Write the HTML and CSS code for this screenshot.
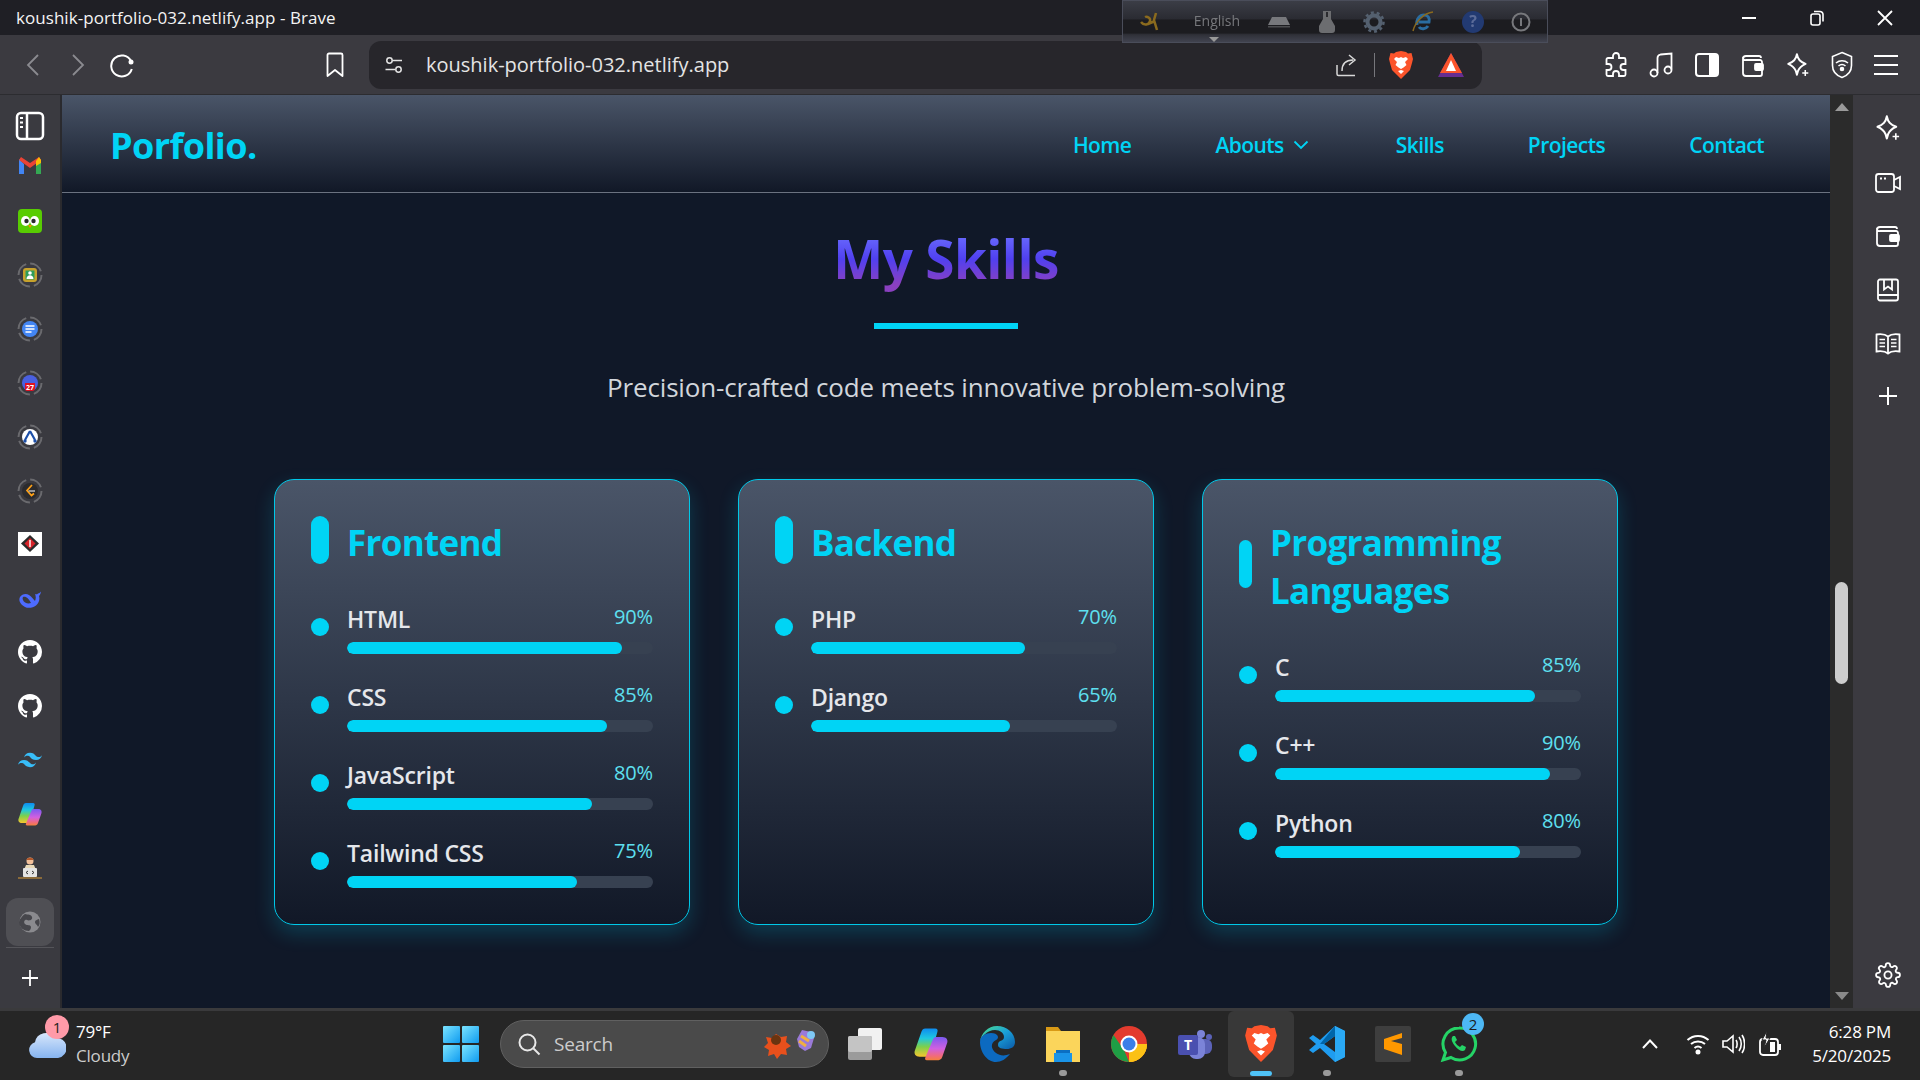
FILE: index.html
```html
<!DOCTYPE html>
<html lang="en">
<head>
  <meta charset="UTF-8" />
  <title>koushik-portfolio-032.netlify.app - Brave</title>
  <link rel="stylesheet" href="styles.css">
</head>
<body>
<svg class="defs" width="0" height="0">
  <defs>
    <symbol id="github" viewBox="0 0 16 16"><path fill="#fff" d="M8 0C3.58 0 0 3.58 0 8c0 3.54 2.29 6.53 5.47 7.59.4.07.55-.17.55-.38 0-.19-.01-.82-.01-1.49-2.01.37-2.53-.49-2.69-.94-.09-.23-.48-.94-.82-1.13-.28-.15-.68-.52-.01-.53.63-.01 1.08.58 1.23.82.72 1.21 1.87.87 2.33.66.07-.52.28-.87.51-1.07-1.78-.2-3.64-.89-3.64-3.95 0-.87.31-1.59.82-2.15-.08-.2-.36-1.02.08-2.12 0 0 .67-.21 2.2.82.64-.18 1.32-.27 2-.27.68 0 1.36.09 2 .27 1.53-1.04 2.2-.82 2.2-.82.44 1.1.16 1.92.08 2.12.51.56.82 1.27.82 2.15 0 3.07-1.87 3.75-3.65 3.95.29.25.54.73.54 1.48 0 1.07-.01 1.93-.01 2.2 0 .21.15.46.55.38A8.013 8.013 0 0016 8c0-4.42-3.58-8-8-8z"/></symbol>
    <symbol id="leo" viewBox="0 0 24 24"><path fill="none" stroke="#fff" stroke-width="1.8" stroke-linejoin="round" d="M11 2c1 5 3 7 8 9-3.500 1.500-5.500 3-7 6.500l-1 3.500-1-3.500C8.500 14 6.500 12.500 3 11c5-2 7-4 8-9z"/><path fill="#fff" d="M18 16.500h1.400v2.100h2.100V20h-2.100v2.100H18V20h-2.100v-1.400H18z"/></symbol>
    <symbol id="brave" viewBox="0 0 24 28"><path fill="#fb542b" d="M12 0l5 1 2 1.500L22.500 2 24 8l-1 4-2 7-5 5-4 4-4-4-5-5-2-7-1-4 1.500-6L5 2.500 7 1z"/><path fill="#fff" d="M12 18l-2.500-1.500-3-2.500L8 11 5 8l2-2 3 1 2-1 2 1 3-1 2 2-3 3 1.500 3-3 2.500zM9 20l3-1 3 1-3 3z"/></symbol>
    <linearGradient id="copilotA" x1="0" y1="0" x2="0" y2="1"><stop offset="0" stop-color="#0e8cf0"/><stop offset=".35" stop-color="#1fc8e0"/><stop offset=".65" stop-color="#7ed04a"/><stop offset="1" stop-color="#f7c52e"/></linearGradient>
    <linearGradient id="copilotB" x1="0" y1="0" x2="0" y2="1"><stop offset="0" stop-color="#7a5af0"/><stop offset=".5" stop-color="#d060e0"/><stop offset=".8" stop-color="#f06a80"/><stop offset="1" stop-color="#f5803b"/></linearGradient>
    <symbol id="copilot" viewBox="0 0 24 24"><path fill="url(#copilotA)" d="M8 1h7c1.500 0 2 1 1.500 2.500L12 19c-.5 1.500-1.500 2-3 2H4c-3 0-4-2-3.500-4L5 4c.5-2 1.500-3 3-3z"/><path fill="url(#copilotB)" d="M15.500 7H20c3 0 4 2 3.500 4l-3.500 10c-.5 2-2 2.500-4 2.500H9c-1 0-1.500-1-1-2l5.500-13c.5-1 1-1.500 2-1.500z"/></symbol>
    <linearGradient id="startTile" x1="0" y1="0" x2="1" y2="1"><stop offset="0" stop-color="#7be4ff"/><stop offset="1" stop-color="#0f9bf0"/></linearGradient>
    <linearGradient id="edgeG" x1="0" y1="0" x2="1" y2="1"><stop offset="0" stop-color="#4fe08a"/><stop offset=".5" stop-color="#1aa0d8"/><stop offset="1" stop-color="#0b5aa8"/></linearGradient>
  </defs>
</svg>

<div class="window">
  <div class="titlebar">
    <div class="window-title">koushik-portfolio-032.netlify.app - Brave</div>
    <div class="window-controls">
      <svg width="16" height="16" viewBox="0 0 16 16"><path d="M1 8h14" stroke="#fff" stroke-width="2"/></svg>
      <svg width="16" height="16" viewBox="0 0 16 16" fill="none" stroke="#fff" stroke-width="1.600"><rect x="2" y="4" width="9" height="11" rx="2"/><path d="M5 1.500h6a3 3 0 013 3v7"/></svg>
      <svg width="16" height="16" viewBox="0 0 16 16"><path d="M1 1l14 14M15 1L1 15" stroke="#fff" stroke-width="1.800"/></svg>
    </div>
  </div>

  <div class="lang-bar">
    <svg width="22" height="20" viewBox="0 0 22 20" fill="none" stroke="#8a6a1e" stroke-width="2.500"><path d="M2 10c3 4 8 3 9-1 1-3-3-5-5-4M17 1l-2 7 3 10M9 12l7-3"/></svg>
    <span class="lang-name">English</span>
    <svg width="24" height="12" viewBox="0 0 24 12"><path d="M5 1h14l4 8H1z" fill="#77787c"/><path d="M1 10h22v1.500H1z" fill="#4c4d50"/></svg>
    <svg width="18" height="24" viewBox="0 0 18 24"><path d="M5 1h8v8l4 7v4a3 3 0 01-3 3H4a3 3 0 01-3-3v-4l4-7z" fill="#6c6d70"/><path d="M8 2h2v5H8z" fill="#2b2b2f"/></svg>
    <svg width="22" height="22" viewBox="0 0 22 22"><circle cx="11" cy="11" r="6.500" fill="none" stroke="#54606f" stroke-width="4"/><circle cx="11" cy="11" r="9.500" fill="none" stroke="#54606f" stroke-width="2.500" stroke-dasharray="3 2.900"/></svg>
    <svg width="24" height="24" viewBox="0 0 24 24" fill="none"><path d="M6 15c-1-6 3-10 7-10 4 0 6 3 5 7H8m9 4c-2 3-7 4-9 1" stroke="#2a6ca0" stroke-width="3"/><path d="M2 21C4 12 13 3 22 2" stroke="#8a6a1e" stroke-width="1.500"/></svg>
    <svg width="22" height="22" viewBox="0 0 22 22"><circle cx="11" cy="11" r="11" fill="#223a72"/><text class="lang-q" x="11" y="16">?</text></svg>
    <svg width="20" height="20" viewBox="0 0 20 20"><circle cx="10" cy="10" r="8.500" fill="none" stroke="#77787c" stroke-width="2"/><path d="M9 6h2v8H9z" fill="#77787c"/></svg>
    <span class="lang-caret"></span>
  </div>

  <div class="toolbar">
    <svg class="nav-back" width="14" height="24" viewBox="0 0 14 24"><path d="M12 2L2 12l10 10" fill="none" stroke="#8b8b90" stroke-width="1.800"/></svg>
    <svg class="nav-forward" width="14" height="24" viewBox="0 0 14 24"><path d="M2 2l10 10L2 22" fill="none" stroke="#8b8b90" stroke-width="1.800"/></svg>
    <svg class="nav-reload" width="26" height="26" viewBox="0 0 26 26"><path d="M22 9a10.500 10.500 0 10.800 8" fill="none" stroke="#fff" stroke-width="2"/><circle cx="22" cy="10" r="2.500" fill="#fff"/></svg>
    <svg class="nav-bookmark" width="20" height="26" viewBox="0 0 20 26"><path d="M2.500 3a1.500 1.500 0 011.500-1.500h12A1.500 1.500 0 0117.500 3v21L10 18l-7.500 6z" fill="none" stroke="#fff" stroke-width="1.800" stroke-linejoin="round"/></svg>
    <div class="address">
      <svg width="20" height="20" viewBox="0 0 20 20" fill="none" stroke="#e4e4e4" stroke-width="1.500"><circle cx="5.500" cy="5.500" r="2.700"/><path d="M8.500 5.500H18M1.500 14.500H11"/><circle cx="14.500" cy="14.500" r="2.700"/></svg>
      <span class="address-url">koushik-portfolio-032.netlify.app</span>
      <svg class="share" width="24" height="24" viewBox="0 0 24 24" fill="none" stroke="#d8d8d8" stroke-width="1.500"><path d="M2 12v9a1.500 1.500 0 001.500 1.500H20M7 18c0-7 4-11 11-11M14 2l6 5-6 5"/></svg>
      <span class="address-sep"></span>
      <svg class="address-brave" width="24" height="28"><use href="#brave"/></svg>
      <svg class="address-rewards" width="28" height="26" viewBox="0 0 28 26"><path d="M14 1L1 25h26z" fill="#662d91"/><path d="M14 1L3 21h22z" fill="#fb542b"/><path d="M14 8l-5 11h10z" fill="#fff"/></svg>
    </div>
    <div class="tool-icons">
      <svg width="26" height="26" viewBox="0 0 26 26"><path d="M10 4a3 3 0 016 0v2h5a1.500 1.500 0 011.500 1.500V12h-2a3 3 0 000 6h2v4.500A1.500 1.500 0 0121 24h-5v-2a3 3 0 00-6 0v2H5a1.500 1.500 0 01-1.500-1.500V18h2a3 3 0 000-6h-2V7.500A1.500 1.500 0 015 6h5z" fill="none" stroke="#fff" stroke-width="1.800"/></svg>
      <svg width="26" height="26" viewBox="0 0 26 26" fill="none" stroke="#fff" stroke-width="1.800"><circle cx="6" cy="21" r="3.500"/><circle cx="20" cy="18" r="3.500"/><path d="M9.500 21V6c0-2 1-3 3-3.500l11-1v16"/></svg>
      <svg width="26" height="26" viewBox="0 0 26 26"><rect x="2" y="2" width="22" height="22" rx="3" fill="none" stroke="#fff" stroke-width="2"/><path d="M15 2h6a3 3 0 013 3v16a3 3 0 01-3 3h-6z" fill="#fff"/></svg>
      <svg width="26" height="26" viewBox="0 0 26 26" fill="none" stroke="#fff" stroke-width="1.800"><path d="M4 7a3 3 0 013-3h13a2 2 0 012 2M4 7v14a3 3 0 003 3h14a2 2 0 002-2V10a2 2 0 00-2-2H7a3 3 0 01-3-1z"/><rect x="16" y="12" width="8" height="6" rx="1" fill="#fff"/></svg>
      <svg width="26" height="26"><use href="#leo"/></svg>
      <svg width="24" height="28" viewBox="0 0 24 28" fill="none" stroke="#fff" stroke-width="1.600"><path d="M12 1.500l9.500 4v9c0 6-4 10-9.500 12-5.500-2-9.500-6-9.500-12v-9z"/><path d="M6 12c3.500-3 8.500-3 12 0M8.500 15c2-1.700 5-1.700 7 0"/><circle cx="12" cy="18" r="1.500" fill="#fff"/></svg>
      <svg width="26" height="26" viewBox="0 0 26 26"><path d="M1 4h24M1 13h24M1 22h24" stroke="#fff" stroke-width="2"/></svg>
    </div>
  </div>

  <div class="browser">
    <aside class="sidebar">
      <svg class="side-icon" width="30" height="30" viewBox="0 0 30 30" fill="none" stroke="#fff" stroke-width="2.500"><rect x="2" y="2" width="26" height="26" rx="4"/><path d="M12 2v26"/><path d="M5 7h3M5 11.500h3M5 16h3" stroke-width="2"/></svg>
      <svg class="side-icon" width="24" height="18" viewBox="0 0 24 18"><path d="M1 3v15h5V8z" fill="#4285f4"/><path d="M23 3v15h-5V8z" fill="#34a853"/><path d="M1 4l11 8 11-8-2-3-9 6-9-6z" fill="#ea4335"/><path d="M21 1l2 3v3l-5 3V5z" fill="#fbbc04"/></svg>
      <svg class="side-icon" width="24" height="24" viewBox="0 0 24 24"><rect width="24" height="24" rx="4" fill="#58cc02"/><ellipse cx="7.500" cy="12" rx="4.500" ry="5" fill="#fff"/><ellipse cx="16.500" cy="12" rx="4.500" ry="5" fill="#fff"/><circle cx="8.500" cy="12" r="2.200" fill="#2b2b2b"/><circle cx="15.500" cy="12" r="2.200" fill="#2b2b2b"/><path d="M10 16h4l-2 3z" fill="#f49000"/></svg>
      <svg class="side-icon" width="26" height="26" viewBox="0 0 26 26"><circle class="ring" cx="13" cy="13" r="11.500"/><rect x="6" y="6" width="14" height="14" rx="3" fill="#c7a22c"/><rect x="8.500" y="8.500" width="9" height="9" fill="#2d9d5a"/><circle cx="13" cy="11" r="1.800" fill="#fff"/><path d="M9.500 17c0-5 7-5 7 0z" fill="#fff"/></svg>
      <svg class="side-icon" width="26" height="26" viewBox="0 0 26 26"><circle class="ring" cx="13" cy="13" r="11.500"/><circle cx="13" cy="13" r="8" fill="#4285f4"/><path d="M8.500 10h9M8.500 13h9M8.500 16h6" stroke="#fff" stroke-width="1.500"/></svg>
      <svg class="side-icon" width="26" height="26" viewBox="0 0 26 26"><circle class="ring" cx="13" cy="13" r="11.500"/><circle cx="13" cy="13" r="8" fill="#4a60e0"/><path d="M8 13h10v5a3 3 0 01-3 3h-5a2 2 0 01-2-2z" fill="#e01020"/><text class="cal-day" x="13" y="20">27</text></svg>
      <svg class="side-icon" width="26" height="26" viewBox="0 0 26 26"><circle class="ring" cx="13" cy="13" r="11.500"/><circle cx="13" cy="13" r="8" fill="#fff"/><path d="M13 7l-5 9M13 7l5 9" stroke="#1d4fa8" stroke-width="2.200"/><circle cx="8" cy="17" r="1.700" fill="#1d4fa8"/><circle cx="18" cy="17" r="1.700" fill="#1d4fa8"/></svg>
      <svg class="side-icon" width="26" height="26" viewBox="0 0 26 26"><circle class="ring" cx="13" cy="13" r="11.500"/><circle cx="13" cy="13" r="8" fill="#2b2b2e"/><path d="M15 7l-5 5.500 4.500 5 2.500-2" fill="none" stroke="#ffa116" stroke-width="1.700"/><path d="M11.500 13H18" stroke="#bbb" stroke-width="1.500"/></svg>
      <svg class="side-icon" width="24" height="24" viewBox="0 0 24 24"><rect width="24" height="24" fill="#fff"/><path d="M12 3l9 8.500-9 8.500-9-8.500z" fill="#2b2b2b"/><path d="M12 6l5.500 5.500L12 17l-5.500-5.500z" fill="#d8232a"/><path d="M11.300 8h1.400v7h-1.400z" fill="#fff"/></svg>
      <svg class="side-icon" width="24" height="20" viewBox="0 0 24 20"><path fill-rule="evenodd" fill="#4d6bfe" d="M2 9c2-3 6-4 9-2 3 2 4 4 6 6 1-2 1-5 0-7 1 .5 2 .5 3-.5 1 0 2-1 3-2-.3 2-1 3.500-2 4.500 1 3 0 7-3 9.500-3 2.500-8 3-11 1.500C3 17 0 13 2 9zM5 9c3-1 6 2 8 6-3 1-7 0-8-3-.5-1-.5-2 0-3z"/></svg>
      <svg class="side-icon" width="24" height="24"><use href="#github"/></svg>
      <svg class="side-icon" width="24" height="24"><use href="#github"/></svg>
      <svg class="side-icon" width="24" height="24" viewBox="2 4 20 16"><path fill="#38bdf8" d="M12 6c-2.670 0-4.330 1.330-5 4 1-1.330 2.170-1.830 3.500-1.500.76.190 1.300.740 1.900 1.350.980 1 2.090 2.150 4.600 2.150 2.670 0 4.330-1.330 5-4-1 1.330-2.170 1.830-3.500 1.500-.760-.190-1.300-.740-1.900-1.350C15.620 7.150 14.500 6 12 6zM7 12c-2.670 0-4.330 1.330-5 4 1-1.330 2.170-1.830 3.500-1.500.760.190 1.300.740 1.900 1.350C8.380 16.850 9.500 18 12 18c2.670 0 4.330-1.330 5-4-1 1.330-2.170 1.830-3.500 1.500-.760-.190-1.300-.740-1.900-1.350C10.620 13.150 9.500 12 7 12z"/></svg>
      <svg class="side-icon" width="24" height="24"><use href="#copilot"/></svg>
      <svg class="side-icon" width="24" height="24" viewBox="0 0 24 24"><circle cx="12" cy="5" r="3.500" fill="#f2c09a"/><path d="M8.500 4c0-3 7-3 7 0z" fill="#b4582a"/><path d="M8 9h8l2 5H6z" fill="#e7d8b8"/><rect x="5" y="12" width="14" height="9" rx="1" fill="#e4e4e4"/><path d="M10 15l-2 1.500 2 1.500M14 15l2 1.500-2 1.500" fill="none" stroke="#333" stroke-width="1"/><path d="M0 21h24v2H0z" fill="#8a6a3a"/></svg>
      <div class="side-active">
        <svg width="22" height="22" viewBox="0 0 22 22"><circle cx="11" cy="11" r="10.500" fill="#8a8a8e"/><path d="M6 3c3 1 6 0 7 3s-3 4-5 3-4 2-2 4 5 0 6 3c0 2-1 3-2 4-5 0-9-3-10-8 0-3 3-7 6-9zM20 8c-2 1-4 1-4 3s2 2 3 5c2-2 2-5 1-8z" fill="#46464b"/></svg>
      </div>
      <span class="side-rule"></span>
      <svg class="side-plus" width="18" height="18" viewBox="0 0 18 18"><path d="M9 1v16M1 9h16" stroke="#fff" stroke-width="1.800"/></svg>
    </aside>

    <div class="page">
      <header class="site-header">
        <div class="logo">Porfolio.</div>
        <nav class="site-nav">
          <a href="#">Home</a>
          <a href="#" class="has-caret">Abouts
            <svg width="16" height="10" viewBox="0 0 16 10"><path d="M1.500 1.500L8 8l6.500-6.500" fill="none" stroke="#00d4f5" stroke-width="1.800"/></svg>
          </a>
          <a href="#">Skills</a>
          <a href="#">Projects</a>
          <a href="#">Contact</a>
        </nav>
      </header>

      <main class="skills">
        <h1 class="skills-title">My Skills</h1>
        <div class="skills-rule"></div>
        <p class="skills-lead">Precision-crafted code meets innovative problem-solving</p>

        <div class="card-grid">
          <section class="card">
            <h2 class="card-title"><span class="card-pill"></span><span class="card-label">Frontend</span></h2>
            <ul class="skill-list">
              <li class="skill"><span class="skill-dot"></span><div class="skill-body"><div class="skill-head"><span class="skill-name">HTML</span><span class="skill-pct">90%</span></div><div class="skill-track"><div class="skill-fill" style="width:90%"></div></div></div></li>
              <li class="skill"><span class="skill-dot"></span><div class="skill-body"><div class="skill-head"><span class="skill-name">CSS</span><span class="skill-pct">85%</span></div><div class="skill-track"><div class="skill-fill" style="width:85%"></div></div></div></li>
              <li class="skill"><span class="skill-dot"></span><div class="skill-body"><div class="skill-head"><span class="skill-name">JavaScript</span><span class="skill-pct">80%</span></div><div class="skill-track"><div class="skill-fill" style="width:80%"></div></div></div></li>
              <li class="skill"><span class="skill-dot"></span><div class="skill-body"><div class="skill-head"><span class="skill-name">Tailwind CSS</span><span class="skill-pct">75%</span></div><div class="skill-track"><div class="skill-fill" style="width:75%"></div></div></div></li>
            </ul>
          </section>

          <section class="card">
            <h2 class="card-title"><span class="card-pill"></span><span class="card-label">Backend</span></h2>
            <ul class="skill-list">
              <li class="skill"><span class="skill-dot"></span><div class="skill-body"><div class="skill-head"><span class="skill-name">PHP</span><span class="skill-pct">70%</span></div><div class="skill-track"><div class="skill-fill" style="width:70%"></div></div></div></li>
              <li class="skill"><span class="skill-dot"></span><div class="skill-body"><div class="skill-head"><span class="skill-name">Django</span><span class="skill-pct">65%</span></div><div class="skill-track"><div class="skill-fill" style="width:65%"></div></div></div></li>
            </ul>
          </section>

          <section class="card">
            <h2 class="card-title"><span class="card-pill card-pill-narrow"></span><span class="card-label">Programming<br>Languages</span></h2>
            <ul class="skill-list">
              <li class="skill"><span class="skill-dot"></span><div class="skill-body"><div class="skill-head"><span class="skill-name">C</span><span class="skill-pct">85%</span></div><div class="skill-track"><div class="skill-fill" style="width:85%"></div></div></div></li>
              <li class="skill"><span class="skill-dot"></span><div class="skill-body"><div class="skill-head"><span class="skill-name">C++</span><span class="skill-pct">90%</span></div><div class="skill-track"><div class="skill-fill" style="width:90%"></div></div></div></li>
              <li class="skill"><span class="skill-dot"></span><div class="skill-body"><div class="skill-head"><span class="skill-name">Python</span><span class="skill-pct">80%</span></div><div class="skill-track"><div class="skill-fill" style="width:80%"></div></div></div></li>
            </ul>
          </section>
        </div>
      </main>
    </div>

    <div class="scrollbar">
      <span class="arrow-up"></span>
      <span class="scroll-thumb"></span>
      <span class="arrow-down"></span>
    </div>

    <aside class="rightbar">
      <svg width="28" height="28"><use href="#leo"/></svg>
      <svg width="26" height="22" viewBox="0 0 26 22" fill="none" stroke="#fff" stroke-width="1.800"><rect x="1" y="2" width="18" height="18" rx="2.500"/><path d="M19 8l6-3v12l-6-3"/><path d="M5 6.500h2M9 6.500h2" stroke-width="2"/></svg>
      <svg width="26" height="24" viewBox="0 0 26 24" fill="none" stroke="#fff" stroke-width="1.800"><path d="M2 6a3 3 0 013-3h15a2 2 0 012 2M2 6v13a3 3 0 003 3h16a2 2 0 002-2V9a2 2 0 00-2-2H5a3 3 0 01-3-1z"/><rect x="15" y="11" width="9" height="6" rx="1" fill="#fff"/></svg>
      <svg width="24" height="24" viewBox="0 0 24 24" fill="none" stroke="#fff" stroke-width="1.800"><rect x="2" y="1.500" width="20" height="21" rx="2"/><path d="M2 17h20M8 1.500v10l4-3 4 3v-10"/></svg>
      <svg width="26" height="24" viewBox="0 0 26 24" fill="none" stroke="#fff" stroke-width="1.800"><path d="M13 4.500C10 2 5 2 1.500 2.500v17c3.500-.5 8.500-.5 11.500 2 3-2.500 8-2.500 11.500-2v-17C21 2 16 2 13 4.500zM13 4.500V21"/><path d="M4.500 7.500h5.500M4.500 11h5.500M4.500 14.500h5.500M16 7.500h5.500M16 11h5.500M16 14.500h5.500" stroke-width="1.300"/></svg>
      <svg width="20" height="20" viewBox="0 0 20 20"><path d="M10 1v18M1 10h18" stroke="#fff" stroke-width="2"/></svg>
      <svg class="rightbar-gear" width="26" height="26" viewBox="0 0 24 24" fill="none" stroke="#fff" stroke-width="1.700"><circle cx="12" cy="12" r="3.300"/><path d="M19.400 15a1.650 1.650 0 00.330 1.820l.060.060a2 2 0 11-2.830 2.830l-.060-.060a1.650 1.650 0 00-2.820 1.170V21a2 2 0 01-4 0v-.090A1.650 1.650 0 009 19.400a1.650 1.650 0 00-1.820.330l-.060.060a2 2 0 11-2.830-2.830l.060-.060a1.650 1.650 0 00-1.170-2.820H3a2 2 0 010-4h.090A1.650 1.650 0 004.600 9a1.650 1.650 0 00-.330-1.820l-.060-.060a2 2 0 112.830-2.830l.060.060a1.650 1.650 0 002.820-1.170V3a2 2 0 014 0v.090a1.650 1.650 0 002.820 1.170l.060-.060a2 2 0 112.830 2.830l-.060.060a1.650 1.650 0 001.170 2.820H21a2 2 0 010 4h-.090a1.650 1.650 0 00-1.510 1z"/></svg>
    </aside>
  </div>

  <footer class="taskbar">
    <div class="weather">
      <div class="weather-icon">
        <svg width="38" height="30" viewBox="0 0 38 30"><defs><linearGradient id="cloudG" x1="0" y1="0" x2="0" y2="1"><stop offset="0" stop-color="#d7e6fb"/><stop offset="1" stop-color="#86b4f0"/></linearGradient></defs><path d="M9 29a8 8 0 01-2-15.700A11 11 0 0127 9a9 9 0 013 20z" fill="url(#cloudG)"/></svg>
        <span class="weather-badge">1</span>
      </div>
      <div class="weather-text"><div>79°F</div><div class="weather-sub">Cloudy</div></div>
    </div>

    <div class="task-slot">
      <svg width="36" height="36" viewBox="0 0 36 36" fill="url(#startTile)"><rect width="17" height="17" rx="1"/><rect x="19" width="17" height="17" rx="1"/><rect y="19" width="17" height="17" rx="1"/><rect x="19" y="19" width="17" height="17" rx="1"/></svg>
    </div>

    <div class="search">
      <svg width="24" height="24" viewBox="0 0 24 24" fill="none" stroke="#e8e8e8" stroke-width="2"><circle cx="10.500" cy="10.500" r="8"/><path d="M16.500 16.500l6 6"/></svg>
      <span class="search-text">Search</span>
      <svg class="search-art" width="58" height="32" viewBox="0 0 58 32"><path d="M18 6l5 3 6-1-1 6 5 4-5 3 1 6-6-1-4 5-3-5-6 2 1-6-5-3 4-4-2-6 6 1z" fill="#e8501c"/><circle cx="18" cy="12" r="5" fill="#6a3410"/><path d="M44 2l9 2 3 6-3 10-6 3-6-4-2-8z" fill="#9a7ad8"/><path d="M43 8l8 5M41 13l7 5" stroke="#f0b040" stroke-width="3"/><circle cx="53" cy="7" r="4" fill="#7ec8f5"/></svg>
    </div>

    <div class="task-icons">
      <div class="task-slot">
        <svg width="34" height="34" viewBox="0 0 34 34"><rect x="10" y="1" width="24" height="22" rx="2" fill="#f1f1f1"/><rect y="9" width="24" height="24" rx="2" fill="#9b9b9b"/><rect y="9" width="24" height="16" rx="2" fill="#c4c4c4"/></svg>
      </div>
      <div class="task-slot"><svg width="34" height="34"><use href="#copilot"/></svg></div>
      <div class="task-slot">
        <svg width="36" height="36" viewBox="0 0 36 36"><path d="M18 0c10 0 18 7 18 16 0 5-4 7-8 7-5 0-9-1-9-4 0-6 6-3 6-8 0-4-4-7-9-7C8 4 2 11 1 16 2 7 9 0 18 0z" fill="url(#edgeG)"/><path d="M1 16c0-6 6-9 11-9 7 0 9 5 5 7-6 3-5 9 0 13 4 3 9 3 14 1-4 5-9 8-14 8C8 36 1 26 1 16z" fill="#0c6ac0"/></svg>
      </div>
      <div class="task-slot has-dot">
        <svg width="36" height="36" viewBox="0 0 36 36"><path d="M1 1h12l3 4H1z" fill="#d99a16"/><path d="M1 5h34v31H1z" fill="#fbd55b"/><path d="M11 24h14v3H11z" fill="#0b6fc2"/><path d="M9 27h18v9H9z" fill="#1a94e8"/></svg>
      </div>
      <div class="task-slot">
        <svg width="36" height="36" viewBox="0 0 36 36"><circle cx="18" cy="18" r="18" fill="#e33b2e"/><path d="M18 18h18a18 18 0 01-18 18z" fill="#fbc116"/><path d="M18 36A18 18 0 012.500 9L13 24z" fill="#1f9e45"/><path d="M18 36a18 18 0 0018-18H26l-8 18z" fill="#fbc116"/><circle cx="18" cy="18" r="8.500" fill="#fff"/><circle cx="18" cy="18" r="6.500" fill="#3a7ee8"/></svg>
      </div>
      <div class="task-slot">
        <svg width="36" height="36" viewBox="0 0 36 36"><circle cx="24" cy="8" r="4" fill="#7b83d8"/><circle cx="32" cy="11" r="3" fill="#5b62b8"/><rect x="18" y="13" width="17" height="15" rx="6" fill="#5b62b8"/><rect x="12" y="11" width="16" height="22" rx="7" fill="#7b83d8"/><rect x="1" y="9" width="20" height="20" rx="2" fill="#4a50b0"/><text class="teams-t" x="11" y="24">T</text></svg>
      </div>
      <div class="task-slot task-active">
        <svg width="32" height="37"><use href="#brave"/></svg>
        <span class="task-current"></span>
      </div>
      <div class="task-slot has-dot">
        <svg width="36" height="36" viewBox="0 0 36 36"><path d="M26 0l10 5v26l-10 5-15-14-7 5-4-3 7-6-7-6 4-3 7 5z" fill="#1f9cf0"/><path d="M26 10v16l-11-8z" fill="#262626"/><path d="M26 0v36l10-5V5z" fill="#2aa9f5"/><path d="M11 18l15-18v10L15 18z" fill="#0065a9"/></svg>
      </div>
      <div class="task-slot">
        <svg width="36" height="36" viewBox="0 0 36 36"><rect width="36" height="36" rx="2" fill="#3e3e3e"/><path d="M27 7L9 13v7l18 5v-7L16 15l11-3zM9 23l18 6v-4L9 20z" fill="#ff9800"/></svg>
      </div>
      <div class="task-slot has-dot">
        <svg width="38" height="38" viewBox="0 0 38 38" fill="none"><path d="M19 3a16 16 0 00-13.500 24.500L3 35l8-2.500A16 16 0 1019 3z" stroke="#25d366" stroke-width="3"/><path d="M13 11c-2 2-2 5 2 10s8 6 10 4l1-3-4-2-2 2c-2-1-4-3-5-5l2-2-2-4z" fill="#25d366"/></svg>
        <span class="task-count">2</span>
      </div>
    </div>

    <div class="tray">
      <svg width="18" height="12" viewBox="0 0 18 12"><path d="M2 10l7-7.500 7 7.500" fill="none" stroke="#fff" stroke-width="2"/></svg>
      <svg class="tray-wifi" width="24" height="22" viewBox="0 0 24 22" fill="none" stroke="#fff" stroke-width="2"><path d="M1.500 7c6-5.500 15-5.500 21 0M5 11c4-3.500 10-3.500 14 0M8.500 15c2-1.700 5-1.700 7 0"/><circle cx="12" cy="19" r="1.500" fill="#fff"/></svg>
      <svg width="24" height="24" viewBox="0 0 24 24" fill="none" stroke="#fff" stroke-width="1.600"><path d="M2 9v6h4l6 5V4L6 9z"/><path d="M15 8c1.500 2 1.500 6 0 8M18 5c3 4 3 10 0 14M21 3c3.500 5 3.500 13 0 18"/></svg>
      <svg width="24" height="26" viewBox="0 0 24 26"><rect x="2" y="8" width="18" height="16" rx="3" fill="none" stroke="#fff" stroke-width="1.800"/><rect x="12" y="11" width="5" height="10" fill="#fff"/><path d="M20 13h3v6h-3z" fill="#fff"/><path d="M9 0L4 9h4l-2 8 6-10H8z" fill="#fff" stroke="#262626"/></svg>
    </div>

    <div class="clock"><div>6:28 PM</div><div>5/20/2025</div></div>
  </footer>
</div>
</body>
</html>
```

FILE: styles.css
```css
* {
  box-sizing: border-box;
}

html, body {
  margin: 0;
  height: 100%;
  overflow: hidden;
}

body {
  font-family: "Open Sans", "Noto Sans", sans-serif;
  background: #262626;
  color: #fff;
}

svg {
  display: block;
  flex-shrink: 0;
}

.defs {
  position: absolute;
}

.window {
  height: 1080px;
  display: flex;
  flex-direction: column;
  position: relative;
}

/* title bar */
.titlebar {
  height: 35px;
  background: #1f1f25;
  display: flex;
  align-items: center;
  justify-content: space-between;
  padding: 0 27px 0 16px;
}

.window-title {
  font-size: 17px;
  letter-spacing: 0.05px;
  color: #f4f4f4;
}

.window-controls {
  display: flex;
  gap: 52px;
}

.lang-bar {
  position: absolute;
  left: 1122px;
  top: 0;
  width: 426px;
  height: 43px;
  display: flex;
  align-items: center;
  justify-content: space-between;
  padding: 0 16px 0 16px;
  background: linear-gradient(#3b3d46, #2a2b32 44%, #1c1c20 46%, #1c1c20 78%, #2f3038 82%, #41434f);
  border: 1px solid #4a4d5a;
  filter: blur(0.6px);
}

.lang-name {
  font-size: 14px;
  color: #77787c;
  margin: 0 0 3px 6px;
}

.lang-q {
  font-family: "Open Sans", sans-serif;
  font-size: 16px;
  font-weight: 700;
  fill: #5b6b98;
  text-anchor: middle;
}

.lang-caret {
  position: absolute;
  left: 86px;
  top: 36px;
  border: 5px solid transparent;
  border-top: 5px solid #999;
  border-bottom: 0;
}

/* toolbar */
.toolbar {
  height: 60px;
  background: #3b3a40;
  display: flex;
  align-items: center;
  border-bottom: 1px solid #2c2c30;
}

.nav-back {
  margin-left: 26px;
}

.nav-forward {
  margin-left: 31px;
}

.nav-reload {
  margin-left: 24px;
}

.nav-bookmark {
  margin-left: 190px;
}

.address {
  margin-left: 24px;
  width: 1113px;
  height: 48px;
  background: #27262b;
  border-radius: 12px;
  display: flex;
  align-items: center;
  padding: 0 15px;
}

.address-url {
  margin-left: 22px;
  font-size: 20px;
  letter-spacing: 0;
  color: #e4e4e4;
}

.share {
  margin-left: auto;
}

.address-sep {
  width: 1px;
  height: 24px;
  background: #77777c;
  margin: 0 14px 0 15px;
}

.address-rewards {
  margin-left: 24px;
  margin-right: 2px;
}

.tool-icons {
  display: flex;
  align-items: center;
  gap: 19.4px;
  margin-left: 121px;
}

/* middle area */
.browser {
  flex: 1;
  min-height: 0;
  display: flex;
}

.sidebar {
  width: 62px;
  flex-shrink: 0;
  background: #3a3a40;
  border-right: 2px solid #2a2a2e;
  display: flex;
  flex-direction: column;
  align-items: center;
  padding-top: 16px;
}

.side-icon {
  margin-bottom: 30px;
}

.side-icon:nth-child(1) {
  margin-bottom: 15px;
}

.side-icon:nth-child(2) {
  margin-bottom: 35px;
}

.side-icon:nth-child(3) {
  margin-bottom: 29px;
}

.side-icon:nth-child(n+4):nth-child(-n+8) {
  margin-bottom: 28px;
}

.side-icon:nth-child(9) {
  margin-bottom: 32px;
}

.side-icon:nth-child(10) {
  margin-bottom: 32px;
}

.ring {
  fill: none;
  stroke: #6a6a6e;
  stroke-width: 2;
  stroke-dasharray: 14 4;
}

.cal-day {
  font-family: "Open Sans", sans-serif;
  font-size: 7px;
  font-weight: 700;
  fill: #fff;
  text-anchor: middle;
}

.side-active {
  width: 48px;
  height: 48px;
  margin-top: -12px;
  background: #4f4f54;
  border-radius: 12px;
  display: flex;
  align-items: center;
  justify-content: center;
}

.side-rule {
  width: 48px;
  height: 1px;
  background: #55555a;
  margin-top: 1px;
}

.side-plus {
  margin-top: 21px;
}

.page {
  flex: 1;
  min-width: 0;
  background: #101828;
}

.site-header {
  height: 98px;
  background: linear-gradient(#4a5568, #111827);
  border-bottom: 1px solid #6b7280;
  display: flex;
  align-items: center;
  justify-content: space-between;
  padding: 3px 66px 0 48px;
}

.logo {
  font-size: 36px;
  font-weight: 700;
  letter-spacing: -0.6px;
  margin-top: 1px;
  color: #00d4f5;
}

.site-nav {
  display: flex;
  gap: 84px;
}

.site-nav a {
  font-size: 21px;
  font-weight: 600;
  letter-spacing: -0.55px;
  color: #00d4f5;
  text-decoration: none;
}

.has-caret {
  display: flex;
  align-items: center;
  gap: 9px;
  margin-right: 3px;
}

/* skills section */
.skills {
  display: flex;
  flex-direction: column;
  align-items: center;
}

.skills-title {
  margin: 30px 0 0;
  font-size: 53px;
  line-height: 72px;
  font-weight: 700;
  letter-spacing: -0.6px;
  background: linear-gradient(#6c70ff 12%, #5040f0 50%, #8a40c0 85%);
  -webkit-background-clip: text;
  background-clip: text;
  color: transparent;
}

.skills-rule {
  width: 144px;
  height: 6px;
  margin-top: 28px;
  background: #00d4f5;
}

.skills-lead {
  margin: 40px 0 0;
  font-size: 26px;
  line-height: 36px;
  letter-spacing: -0.15px;
  color: #d1d5db;
}

.card-grid {
  margin-top: 74px;
  width: 1344px;
  flex-shrink: 0;
  display: grid;
  grid-template-columns: repeat(3, 416px);
  gap: 48px;
}

.card {
  border: 1px solid #00c8e8;
  border-radius: 20px;
  padding: 36px;
  background: linear-gradient(#4a5568, #111827);
  box-shadow: 0 8px 20px rgba(0, 212, 245, 0.2);
}

.card-title {
  margin: 0 0 38px;
  display: flex;
  align-items: center;
  gap: 18px;
  font-size: 35px;
  line-height: 48px;
  font-weight: 700;
  letter-spacing: -0.7px;
  color: #00d4f5;
}

.card-label {
  padding-top: 3px;
  margin-bottom: -3px;
}

.card-pill {
  width: 18px;
  height: 48px;
  border-radius: 9px;
  background: #00d4f5;
  flex-shrink: 0;
}

.card-pill-narrow {
  width: 13px;
}

.skill-list {
  list-style: none;
  margin: 0;
  padding: 0;
  display: flex;
  flex-direction: column;
  gap: 26px;
}

.skill {
  display: flex;
  align-items: center;
  gap: 18px;
}

.skill-dot {
  width: 18px;
  height: 18px;
  border-radius: 50%;
  background: #00d4f5;
  flex-shrink: 0;
  margin-bottom: 2px;
}

.skill-body {
  flex: 1;
}

.skill-head {
  height: 32px;
  margin-bottom: 8px;
  display: flex;
  justify-content: space-between;
}

.skill-name {
  font-size: 23px;
  line-height: 34px;
  font-weight: 600;
  letter-spacing: -0.2px;
  color: #e5e7eb;
}

.skill-pct {
  font-size: 20px;
  line-height: 30px;
  letter-spacing: -0.1px;
  color: #5ee0f0;
}

.skill-track {
  height: 12px;
  border-radius: 6px;
  background: #374151;
  overflow: hidden;
}

.skill-fill {
  height: 100%;
  border-radius: 6px;
  background: #00d4f5;
}

.scrollbar {
  width: 23px;
  flex-shrink: 0;
  background: #2b2b2b;
  display: flex;
  flex-direction: column;
  align-items: center;
  padding: 8px 0;
}

.arrow-up {
  border: 7px solid transparent;
  border-bottom: 8px solid #9a9a9a;
  border-top: 0;
}

.scroll-thumb {
  width: 13px;
  height: 102px;
  margin-top: 471px;
  border-radius: 7px;
  background: #cdcdcd;
}

.arrow-down {
  margin-top: auto;
  border: 7px solid transparent;
  border-top: 8px solid #8a8a8a;
  border-bottom: 0;
}

.rightbar {
  width: 67px;
  flex-shrink: 0;
  background: #3b3a40;
  display: flex;
  flex-direction: column;
  align-items: center;
  gap: 30px;
  padding: 19px 0 0 2px;
}

.rightbar-gear {
  margin-top: auto;
  margin-bottom: 20px;
}

/* taskbar */
.taskbar {
  height: 72px;
  background: #262626;
  border-top: 3px solid #3a3a3c;
  padding-bottom: 4px;
  display: flex;
  align-items: center;
}

.weather {
  width: 428px;
  flex-shrink: 0;
  display: flex;
  align-items: center;
  gap: 10px;
  padding-left: 28px;
}

.weather-icon {
  position: relative;
}

.weather-badge {
  position: absolute;
  top: -14px;
  left: 17px;
  width: 24px;
  height: 24px;
  border-radius: 50%;
  background: #ff9aa8;
  color: #222;
  font-size: 15px;
  line-height: 24px;
  text-align: center;
}

.weather-text {
  font-size: 17px;
  line-height: 24px;
  letter-spacing: -0.2px;
}

.weather-sub {
  color: #ccc;
}

.task-slot {
  width: 66px;
  height: 66px;
  flex-shrink: 0;
  position: relative;
  display: flex;
  align-items: center;
  justify-content: center;
}

.search {
  margin-left: 6px;
  width: 329px;
  height: 48px;
  flex-shrink: 0;
  background: #4a4a4a;
  border: 1px solid #606060;
  border-radius: 24px;
  display: flex;
  align-items: center;
  padding: 0 12px 0 16px;
}

.search-text {
  margin-left: 13px;
  font-size: 19px;
  letter-spacing: -0.2px;
  color: #ccc;
}

.search-art {
  margin-left: auto;
}

.task-icons {
  margin-left: 3px;
  display: flex;
}

.has-dot::after {
  content: "";
  position: absolute;
  left: 29px;
  bottom: 1px;
  width: 8px;
  height: 6px;
  border-radius: 3px;
  background: #9a9a9a;
}

.task-active {
  background: #383838;
  border-radius: 6px;
}

.task-current {
  position: absolute;
  left: 22px;
  bottom: 1px;
  width: 22px;
  height: 5px;
  border-radius: 3px;
  background: #4fc3f7;
}

.task-count {
  position: absolute;
  top: 2px;
  right: 8px;
  width: 22px;
  height: 22px;
  border-radius: 50%;
  background: #4db8f5;
  color: #1c1c1c;
  font-size: 15px;
  line-height: 22px;
  text-align: center;
}

.teams-t {
  font-family: "Open Sans", sans-serif;
  font-size: 14px;
  font-weight: 700;
  fill: #fff;
  text-anchor: middle;
}

.tray {
  margin-left: auto;
  display: flex;
  align-items: center;
  gap: 13px;
}

.tray-wifi {
  margin: 0 -2px 0 14px;
}

.clock {
  margin: 0 29px 0 30px;
  text-align: right;
  font-size: 17px;
  line-height: 24px;
  letter-spacing: -0.2px;
}
```
